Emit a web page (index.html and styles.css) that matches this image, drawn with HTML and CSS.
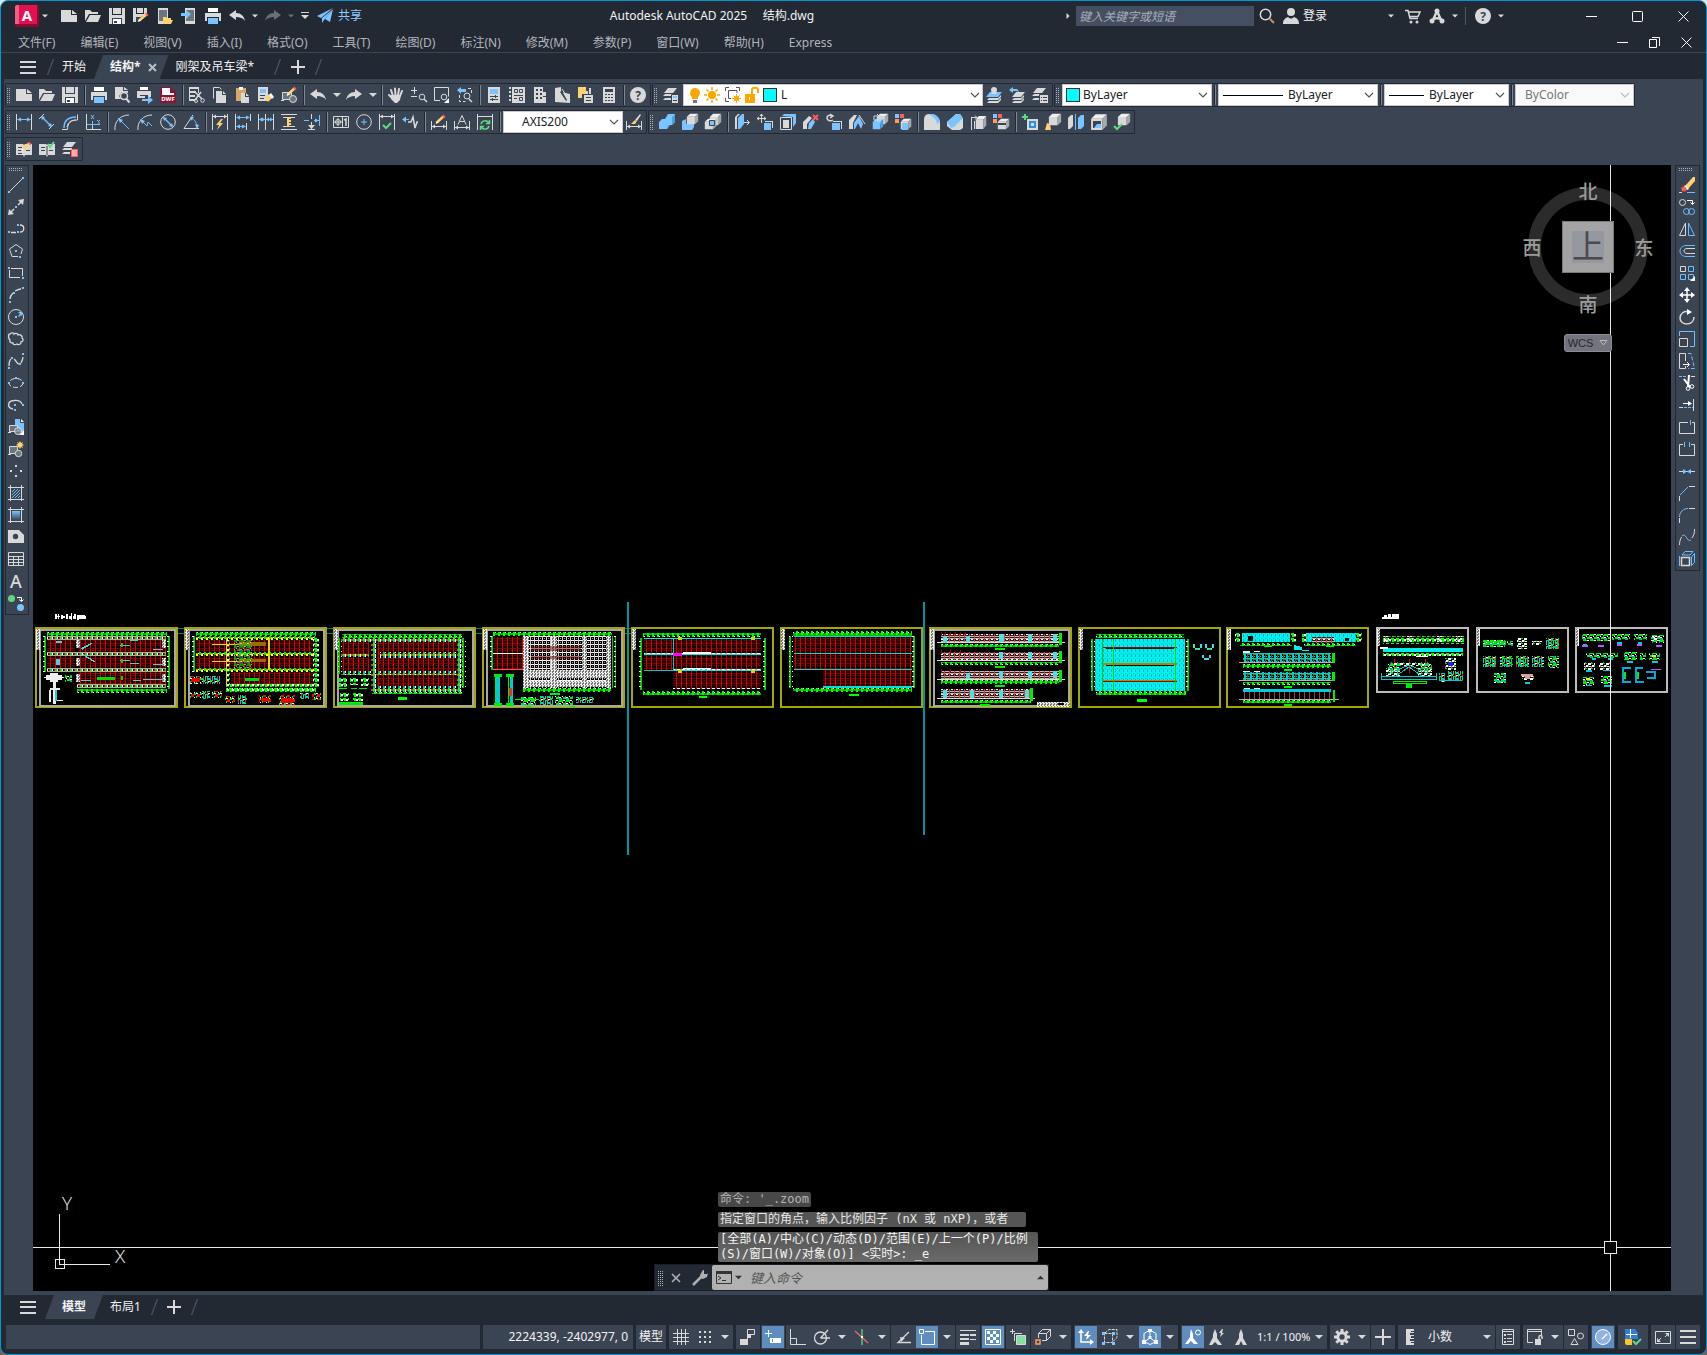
FILE: index.html
```html
<!DOCTYPE html>
<html lang="zh-CN">
<head>
<meta charset="utf-8">
<meta name="viewport" content="width=device-width, initial-scale=1">
<title>Autodesk AutoCAD 2025 结构.dwg</title>
<link rel="stylesheet" href="styles.css">
</head>
<body>
<svg class="defs" aria-hidden="true">
<defs>
<symbol id="new" viewBox="0 0 16 16"><path class="f" d="M0 2h10v5h6v7H0z"/><path class="f" d="M11 2l5 4h-5z"/></symbol>
<symbol id="open" viewBox="0 0 16 16"><path class="f" d="M0 2h5l2 2h6v2H4L0 13z"/><path class="f" d="M5 7h11l-3 7H1z"/></symbol>
<symbol id="save" viewBox="0 0 16 16"><path class="f" d="M0 0h3v7h10V0h3v16H0z"/><path class="f" d="M4 0h8v6H4z"/><path class="fd" d="M3 10h10v6H3z"/><path class="fw" d="M4 11h8v5H4z"/><path class="fd" d="M5 13h3v2H5z"/></symbol>
<symbol id="print" viewBox="0 0 16 16"><path class="fw" d="M3 0h10v4H3z"/><path class="f" d="M0 5h16v8h-2V9H2v4H0z"/><path class="fb" d="M3 10h10v6H3z"/></symbol>
<symbol id="undo" viewBox="0 0 16 16"><path class="f" d="M0 7l7-5v3c5 0 8 3 9 8-2-3-5-4-9-4v3z"/></symbol>
<symbol id="redo" viewBox="0 0 16 16"><path class="f" d="M16 7L9 2v3C4 5 1 8 0 13c2-3 5-4 9-4v3z"/></symbol>
<symbol id="caret" viewBox="0 0 8 8"><path class="f" d="M0 2h8L4 6z"/></symbol>
<symbol id="chev" viewBox="0 0 10 10"><path fill="none" stroke="currentColor" stroke-width="1.2" d="M1 3l4 4 4-4"/></symbol>
<symbol id="slash" viewBox="0 0 7 16"><path d="M6.500 0L.5 16" fill="none" stroke="#4a5362" stroke-width="1.300"/></symbol>
<symbol id="plus" viewBox="0 0 14 14"><path class="f" d="M6 0h2v6h6v2H8v6H6V8H0V6h6z"/></symbol>
<symbol id="burger" viewBox="0 0 16 13"><path class="f" d="M0 0h16v2H0zM0 5h16v2H0zM0 11h16v2H0z"/></symbol>
<symbol id="layers" viewBox="0 0 16 16"><path class="f" d="M5 1h9l-4 5H1zM2 7h8v2H0zM2 11h6v2H0z"/></symbol>
<symbol id="pencil" viewBox="0 0 16 16" preserveAspectRatio="none"><path class="fy" d="M5 11l1-3 6-6 2 2-6 6z"/><path class="fr" d="M12 2l1-1.500L15.500 3 14 5z"/><path class="fw" d="M5 11l1-3 2 2z"/></symbol>
<symbol id="box" viewBox="0 0 16 16" preserveAspectRatio="none"><path fill="#eee" d="M1 5l4-4h10l-4 4z"/><path class="f" d="M1 5h10v10H1z"/><path fill="#a5a9ad" d="M11 5l4-4v10l-4 4z"/></symbol>
<symbol id="boxb" viewBox="0 0 16 16" preserveAspectRatio="none"><path fill="#a8d8ff" d="M1 5l4-4h10l-4 4z"/><path class="fb" d="M1 5h10v10H1z"/><path fill="#4aa0e0" d="M11 5l4-4v10l-4 4z"/></symbol>

<pattern id="pRed" width="5" height="5" patternUnits="userSpaceOnUse"><path fill="#160000" d="M0 0h5v5H0z"/><path fill="#7c0000" d="M0 0h5v1H0z"/><path fill="#d00000" d="M0 0h1v5H0z"/><path fill="#600" d="M2 2h3v1H2z"/></pattern>
<pattern id="pGrn" width="5" height="4" patternUnits="userSpaceOnUse"><path fill="#00b800" d="M0 1h5v2H0z"/><path fill="#0f0" d="M1 0h2v4H1z"/><path fill="#fff" d="M3 0h1v1H3z"/></pattern>
<pattern id="pGrnV" width="4" height="5" patternUnits="userSpaceOnUse"><path fill="#0c0" d="M1 0h2v5H1z"/><path fill="#fff" d="M0 3h2v1H0z"/></pattern>
<pattern id="pTee" width="5" height="5" patternUnits="userSpaceOnUse"><path fill="#0f0" d="M0 0h3v2H0zM1 2h2v2H1z"/><path fill="#fff" d="M3 1h2v2H3z"/><path fill="#090" d="M3 3h2v1H3z"/></pattern>
<pattern id="pRow" width="5" height="4" patternUnits="userSpaceOnUse"><path fill="#aaa" d="M0 0h5v1H0zM0 3h5v1H0z"/><path fill="#0e0" d="M0 1h2v2H0z"/><path fill="#fff" d="M2 1h1v2H2z"/><path fill="#d00" d="M4 1h1v2H4z"/></pattern>
<pattern id="pRowY" width="5" height="4" patternUnits="userSpaceOnUse"><path fill="#aa0" d="M0 1h5v1H0z"/><path fill="#0e0" d="M0 0h2v3H0z"/><path fill="#ff0" d="M2 2h2v2H2z"/><path fill="#fff" d="M4 1h1v1H4z"/></pattern>
<pattern id="pRowR" width="5" height="5" patternUnits="userSpaceOnUse"><path fill="#0f0" d="M0 0h2v3H0z"/><path fill="#fff" d="M2 1h1v4H2z"/><path fill="#e33" d="M3 1h2v2H3z"/><path fill="#0aa" d="M0 3h2v2H0z"/></pattern>
<pattern id="pWht" width="4" height="4" patternUnits="userSpaceOnUse"><path fill="#000" d="M0 0h4v4H0z"/><path fill="#fff" d="M0 0h4v1H0z"/><path fill="#d8c8c8" d="M0 0h1v4H0z"/><path fill="#999" d="M2 2h1v1H2z"/></pattern>
<pattern id="pWht2" width="3" height="3" patternUnits="userSpaceOnUse"><path fill="#777" d="M0 0h3v3H0z"/><path fill="#eee" d="M0 0h2v1H0zM0 1h1v2H0zM2 2h1v1H2z"/></pattern>
<pattern id="pPink" width="5" height="5" patternUnits="userSpaceOnUse"><path fill="#2a1a1a" d="M0 0h5v5H0z"/><path fill="#c9b6b6" d="M0 0h5v1H0zM0 3h5v1H0z"/><path fill="#c44" d="M0 0h1v5H0z"/><path fill="#fff" d="M2 1h2v1H2z"/></pattern>
<pattern id="pCyn" width="4" height="5" patternUnits="userSpaceOnUse"><path fill="#00f0f0" d="M0 0h4v5H0z"/><path fill="#00b8c0" d="M1 1h1v3H1zM3 0h1v1H3z"/></pattern>
<pattern id="pCynW" width="5" height="4" patternUnits="userSpaceOnUse"><path fill="#0ee" d="M0 1h5v2H0z"/><path fill="#fff" d="M1 0h3v2H1z"/></pattern>
<pattern id="pCynX" width="6" height="5" patternUnits="userSpaceOnUse"><path fill="#0cc" d="M0 0h6v1H0zM0 3h5v1H0zM0 0h2v5H0z"/><path fill="#770" d="M3 1h3v1H3z"/><path fill="#066" d="M3 2h1v3H3z"/></pattern>
<pattern id="pMixG" width="7" height="6" patternUnits="userSpaceOnUse"><path fill="#0e0" d="M0 0h4v2H0zM4 3h3v2H4zM2 4h1v2H2z"/><path fill="#fff" d="M4 0h2v1H4zM0 3h2v1H0zM3 2h1v1H3z"/><path fill="#0aa" d="M0 4h2v2H0zM6 1h1v2H6z"/></pattern>
<pattern id="pMixC" width="7" height="6" patternUnits="userSpaceOnUse"><path fill="#0cd" d="M0 0h4v1H0zM0 0h1v5H0zM3 2h3v2H3z"/><path fill="#e22" d="M5 0h1v3H5zM2 4h1v2H2z"/><path fill="#0e0" d="M2 1h1v3H2zM5 4h2v2H5z"/><path fill="#fff" d="M3 5h2v1H3z"/></pattern>
<pattern id="pMixR" width="6" height="5" patternUnits="userSpaceOnUse"><path fill="#f00" d="M1 1h3v3H1z"/><path fill="#0e0" d="M4 0h2v2H4zM0 3h1v2H0z"/><path fill="#fff" d="M0 0h2v1H0zM4 4h1v1H4z"/></pattern>
<pattern id="pMixW" width="6" height="5" patternUnits="userSpaceOnUse"><path fill="#fff" d="M0 0h3v2H0zM4 2h2v2H4zM1 3h2v1H1z"/><path fill="#0d0" d="M3 0h2v1H3zM0 2h1v2H0z"/><path fill="#d4a" d="M3 3h1v2H3z"/></pattern>
<linearGradient id="grad" x2="0" y2="1"><stop offset="0" stop-color="#7cc4ff"/><stop offset="1" stop-color="#3b4453"/></linearGradient>
</defs>
</svg>

<div class="window">
<header class="title">
  <button class="app" aria-label="应用程序菜单">A</button>
  <button class="dd" aria-label="展开"><svg><use href="#caret"/></svg></button>
  <div class="quick">
    <button aria-label="新建"><svg><use href="#new"/></svg></button>
    <button aria-label="打开"><svg><use href="#open"/></svg></button>
    <button aria-label="保存"><svg><use href="#save"/></svg></button>
    <button aria-label="另存为"><svg viewBox="0 0 16 16"><path class="f" d="M0 0h3v6h8V0h3v8H9l-3 6H0z"/><path class="f" d="M4 0h6v5H4z"/><path class="fd" d="M3 9h5v5H3z"/><use href="#pencil" y="4" width="16" height="14"/></svg></button>
    <button aria-label="从移动设备打开"><svg viewBox="0 0 16 16"><path class="f" d="M1 0h10v16H1z"/><path fill="#6e747d" d="M2 2h8v11H2z"/><path class="fy" d="M6 9h3l1 1h4v2h2l-2 4H6z"/></svg></button>
    <button aria-label="保存到移动设备"><svg viewBox="0 0 16 16"><path class="f" d="M4 0h10v16H4z"/><path fill="#6e747d" d="M5 2h8v11H5z"/><path class="fb" d="M0 5h5V2l5 4-5 5V8H0z"/></svg></button>
    <button aria-label="打印"><svg><use href="#print"/></svg></button>
    <button aria-label="放弃"><svg><use href="#undo"/></svg></button>
    <button class="dd" aria-label="放弃列表"><svg><use href="#caret"/></svg></button>
    <button class="dim" aria-label="重做"><svg><use href="#redo"/></svg></button>
    <button class="dd dim" aria-label="重做列表"><svg><use href="#caret"/></svg></button>
    <button class="cust" aria-label="自定义"><svg viewBox="0 0 8 8"><path class="f" d="M0 0h8v1H0zM0 3h8L4 7z"/></svg></button>
    <button class="share"><svg viewBox="0 0 16 16"><path class="fb" d="M16 0L0 8l4 2zM15 2L5 10v5l2-3zM16 1L8 11l5 3z"/></svg>共享</button>
  </div>
  <h1>Autodesk AutoCAD 2025 &nbsp;&nbsp;&nbsp; 结构.dwg</h1>
  <div class="info">
    <button class="dd" aria-label="折叠搜索"><svg viewBox="0 0 8 8"><path class="f" d="M2 0l4 4-4 4z"/></svg></button>
    <input type="search" aria-label="搜索" placeholder="键入关键字或短语">
    <button aria-label="查找"><svg viewBox="0 0 16 16"><circle class="s" cx="6.500" cy="6.500" r="5.200" stroke-width="1.500"/><path fill="none" stroke="#c98f5c" stroke-width="2" d="M11 11l4 4"/></svg></button>
    <button class="login"><svg viewBox="0 0 16 16"><circle class="f" cx="8" cy="4" r="4"/><path class="f" d="M0 16c0-4 2-6 5-7 2 2 4 2 6 0 3 1 5 3 5 7z"/></svg>登录</button>
    <button class="dd" aria-label="登录菜单"><svg><use href="#caret"/></svg></button>
    <button class="cart" aria-label="应用商店"><svg viewBox="0 0 16 16"><path class="s" d="M0 2.500h3l2 8h8M4 4h11l-2 4.500H5" stroke-width="1.500"/><circle class="f" cx="6" cy="14" r="1.500"/><circle class="f" cx="12" cy="14" r="1.500"/></svg></button>
    <button aria-label="Autodesk"><svg viewBox="0 0 16 16"><path class="s" stroke-width="2.500" d="M8 3L4 12M8 3l4 9M3 12c3-2 7-2 10 0"/><circle class="f" cx="8" cy="3" r="2.500"/><circle class="f" cx="3" cy="13" r="2.500"/><circle class="f" cx="13" cy="13" r="2.500"/></svg></button>
    <button class="dd" aria-label="更多"><svg><use href="#caret"/></svg></button>
    <i class="bar"></i>
    <button aria-label="帮助"><svg viewBox="0 0 16 16"><circle class="f" cx="8" cy="8" r="8"/><text class="q" x="8" y="12.500">?</text></svg></button>
    <button class="dd" aria-label="帮助菜单"><svg><use href="#caret"/></svg></button>
  </div>
  <div class="winbtns">
    <button aria-label="最小化"><svg viewBox="0 0 11 11"><path class="sw" d="M0 5.500h11"/></svg></button>
    <button aria-label="最大化"><svg viewBox="0 0 11 11"><rect class="sw" x=".5" y=".5" width="10" height="10" rx="1"/></svg></button>
    <button aria-label="关闭"><svg viewBox="0 0 11 11"><path class="sw" d="M.5.5l10 10M10.500.5l-10 10"/></svg></button>
  </div>
</header>

<nav class="menu">
  <button>文件(F)</button><button>编辑(E)</button><button>视图(V)</button><button>插入(I)</button><button>格式(O)</button><button>工具(T)</button><button>绘图(D)</button><button>标注(N)</button><button>修改(M)</button><button>参数(P)</button><button>窗口(W)</button><button>帮助(H)</button><button>Express</button>
  <div class="mdi">
    <button aria-label="最小化图形"><svg viewBox="0 0 11 11"><path class="sw" d="M0 5.500h11"/></svg></button>
    <button aria-label="还原图形"><svg viewBox="0 0 11 11"><path class="sw" d="M.5 2.500h7v8h-7zM3 .5h7.500V9"/></svg></button>
    <button aria-label="关闭图形"><svg viewBox="0 0 11 11"><path class="sw" d="M.5.5l10 10M10.500.5l-10 10"/></svg></button>
  </div>
</nav>

<nav class="tabs files">
  <button class="burger" aria-label="图形列表"><svg><use href="#burger"/></svg></button>
  <svg class="slash first"><use href="#slash"/></svg>
  <button class="start">开始</button>
  <div class="tab on"><button>结构*</button><button class="x" aria-label="关闭"><svg viewBox="0 0 9 9"><path d="M1 1l7 7M8 1L1 8" fill="none" stroke="#b9bec6" stroke-width="2"/></svg></button></div>
  <button class="next long">刚架及吊车梁*</button>
  <svg class="slash"><use href="#slash"/></svg>
  <button class="add" aria-label="新图形"><svg><use href="#plus"/></svg></button>
  <svg class="slash"><use href="#slash"/></svg>
</nav>

<section class="bars">
<div class="row">
  <div class="bar-box"><i class="grip"></i>
    <button aria-label="新建"><svg><use href="#new"/></svg></button>
    <button aria-label="打开"><svg><use href="#open"/></svg></button>
    <button aria-label="保存"><svg><use href="#save"/></svg></button>
    <i class="sep"></i>
    <button aria-label="打印"><svg><use href="#print"/></svg></button>
    <button aria-label="打印预览"><svg viewBox="0 0 16 16"><path class="f" d="M1 0h8v4h5v2L8 5 5 9l2 3H1z"/><path class="f" d="M10 0l4 3h-4z"/><circle class="s" cx="10" cy="9" r="3.500" stroke-width="1.500"/><path class="s" stroke-width="2" d="M12.500 12l3 3.500"/></svg></button>
    <button aria-label="发布"><svg viewBox="0 0 16 16"><path class="fw" d="M3 0h8v3H3z"/><path class="f" d="M0 4h14v6h-3V8H3v3H0z"/><path class="f" d="M3 9h5v2H3z"/><path class="fb" d="M5 12h6v-3l5 4-5 4v-3H5z"/></svg></button>
    <button aria-label="DWF"><svg viewBox="0 0 16 16"><path fill="#8d1430" d="M0 2l2-2h8l6 5v11H0z"/><path class="fw" d="M2 1h8v5h4v2H2z"/><path fill="#8d1430" d="M0 8h16v8H0z"/><text class="dwf" x="8" y="14">DWF</text></svg></button>
    <i class="sep"></i>
    <button aria-label="剪切"><svg viewBox="0 0 16 16"><path class="s" stroke-width="2" d="M0 1h10M1 5h6M1 9h5M0 13h6"/><path class="s" d="M.5 0v14M9.500 0v6"/><path class="s" stroke-width="1.500" d="M5 4l8 8M12 5l-6 8"/><circle class="s" cx="13.500" cy="13.500" r="1.800"/><circle class="s" cx="7" cy="14" r="1.500"/></svg></button>
    <button aria-label="复制"><svg viewBox="0 0 16 16"><path class="s" d="M1.500 11.500V.5h6l2 2"/><path class="f" d="M4 4h6v4h4v8H4zM11 4l3 3h-3z"/></svg></button>
    <button aria-label="粘贴"><svg viewBox="0 0 16 16"><path fill="#d9a866" d="M1 1h10v5H6v8H1z"/><path class="fw" d="M4 0h4v3H4z"/><path class="f" d="M6 6h4v4h4v6H6zM11 6l3 3h-3z"/></svg></button>
    <button aria-label="特性匹配"><svg viewBox="0 0 16 16"><path class="f" d="M0 0h10v14H0z"/><path class="fb" d="M2 2h6v4H2z"/><path class="fd" d="M2 8h5v1H2zM2 11h4v1H2z"/><path class="fy" d="M7 10l4-3 3 4-4 4z"/><path class="fw" d="M11 8l2-2 3 4-2 2z"/></svg></button>
    <button aria-label="块编辑器"><svg viewBox="0 0 16 16"><path fill="#6e747d" stroke="#d9d9d9" d="M1.500 5.500h9v7h-9zM0 13.500h3"/><circle cx="12" cy="12" r="3.500" fill="#6e747d" stroke="#d9d9d9"/><use href="#pencil" x="1" y="-1" width="15" height="14"/></svg></button>
    <i class="sep"></i>
    <button aria-label="放弃"><svg><use href="#undo"/></svg></button>
    <button class="dd" aria-label="放弃列表"><svg><use href="#caret"/></svg></button>
    <button aria-label="重做"><svg><use href="#redo"/></svg></button>
    <button class="dd" aria-label="重做列表"><svg><use href="#caret"/></svg></button>
    <i class="sep"></i>
    <button aria-label="平移"><svg viewBox="0 0 16 16"><path class="s" stroke-width="2" stroke-linecap="round" d="M5 9L3 3M7.500 8L7 1.500M10 8l1-6M12 9l2-5M4 11L1 8"/><path class="f" d="M3 8h10l-1 5-3 3H7l-4-4z"/></svg></button>
    <button aria-label="实时缩放"><svg viewBox="0 0 16 16"><path class="s" d="M0 3.500h6M3.500 0v7M0 9.500h6"/><circle class="s" cx="11" cy="10" r="2.800"/><path class="s" stroke-width="1.500" d="M13 12l3 3"/></svg></button>
    <button aria-label="窗口缩放"><svg viewBox="0 0 16 16"><path class="s" d="M6 13.500H.5V.5h14v9"/><circle class="s" cx="10" cy="10" r="2.800"/><path class="fw" d="M15 11v5h-5z"/></svg></button>
    <button aria-label="缩放上一个"><svg viewBox="0 0 16 16"><path class="fb" d="M0 3l4-3v2h5v3H4v2z"/><path class="s" stroke-dasharray="3 2" d="M2.500 8v6.500h6M11 1.500h3.500V8"/><circle class="s" cx="10" cy="9" r="3"/><path class="s" stroke-width="1.500" d="M12 12l3 3"/></svg></button>
    <i class="sep"></i>
    <button aria-label="特性"><svg viewBox="0 0 16 16"><path class="f" d="M2 0h12v16H2z"/><path class="fb" d="M4 2h8v5H4z"/><path class="fd" d="M4 9h8v1H4zM4 12h8v1H4zM9 8h1v3H9zM6 11h1v3H6z"/></svg></button>
    <button aria-label="设计中心"><svg viewBox="0 0 16 16"><path class="s" stroke-width="2" stroke-dasharray="2 2" d="M1 0v16"/><path class="f" d="M3 0h13v16H3z"/><path fill="none" stroke="#3b4453" d="M5.500 2.500h3v3h-3zM10.500 2.500h3v3h-3zM10.500 10.500h3v3h-3zM5 8.500h9M5 11.500h3"/></svg></button>
    <button aria-label="工具选项板"><svg viewBox="0 0 16 16"><path class="f" d="M2 0h9v5h3v11H2z"/><path class="fd" d="M4 2h2v2H4zM8 2h2v2H8zM4 6h2v2H4zM8 6h2v2H8zM4 10h2v2H4zM8 10h2v2H8zM11 9h4v1h-4z"/></svg></button>
    <button aria-label="图纸集"><svg viewBox="0 0 16 16"><path class="f" d="M0 1l6-1v5l9 2v9L0 15z"/><path class="fd" d="M7 4l5 9-1 1-6-9z"/><path class="s" d="M7 2l8 12"/></svg></button>
    <button aria-label="标记集"><svg viewBox="0 0 16 16"><path class="fy" d="M0 0h8v7H4v4H0z"/><path class="f" d="M6 8h9v8H6zM11 1h2v6h-2zM8 4h2v3H8z"/><path class="fd" d="M8 10h5v1H8zM8 13h5v1H8z"/></svg></button>
    <button aria-label="计算器"><svg viewBox="0 0 16 16"><path class="f" d="M2 0h12v16H2z"/><path class="fd" d="M4 2h8v3H4zM4 7h2v1H4zM7 7h2v1H7zM10 7h2v1h-2zM4 10h2v1H4zM7 10h2v1H7zM10 10h2v1h-2zM4 13h2v1H4zM7 13h2v1H7zM10 13h2v1h-2z"/></svg></button>
    <i class="sep"></i>
    <button aria-label="帮助"><svg viewBox="0 0 16 16"><circle class="f" cx="8" cy="8" r="8"/><text class="q" x="8" y="12.500">?</text></svg></button>
  </div>
  <div class="bar-box"><i class="grip"></i>
    <button aria-label="图层特性"><svg viewBox="0 0 16 16"><use href="#layers" width="16" height="16"/><path class="f" stroke="#3b4453" d="M8.500 7.500h7v9h-7z"/><path class="fb" d="M10 9h4v2h-4z"/><path class="fd" d="M10 13h4v1h-4z"/></svg></button>
    <label class="combo layer"><svg viewBox="0 0 16 16"><circle cx="8" cy="6" r="5" fill="#ffa500"/><path fill="#ffa500" d="M5 8h6v4H5z"/><path fill="#777" d="M6 13h4v3H6z"/></svg><svg viewBox="0 0 16 16"><circle cx="8" cy="8" r="4" fill="#ffa500"/><path stroke="#ffa500" stroke-width="1.500" d="M8 0v3M8 13v3M0 8h3M13 8h3M2.500 2.500l2 2M11.500 11.500l2 2M13.500 2.500l-2 2M4.500 11.500l-2 2"/></svg><svg class="gapl" viewBox="0 0 16 16"><path fill="none" stroke="#555" d="M.5 4V.5H4M11 .5h3.500V4M.5 11v3.500H4M3.500 6V3.500H12V6M3.500 6v5.500H6"/><circle cx="11.500" cy="11.500" r="2.500" fill="#ffa500"/><path stroke="#ffa500" d="M11.500 7v9M7 11.500h9M8.500 8.500l6 6M14.500 8.500l-6 6"/></svg><svg viewBox="0 0 16 16"><path fill="#ffa500" d="M1 7h10v9H1z"/><path fill="none" stroke="#ffa500" stroke-width="2" d="M8 7V3c0-3 6-3 6 0v3"/><path fill="#fff" d="M5 10h1v3H5z"/></svg><i class="sw-c"></i>
      <select aria-label="图层"><option>L</option></select><svg class="chev"><use href="#chev"/></svg></label>
    <button aria-label="置为当前图层"><svg viewBox="0 0 16 16"><path class="fb" d="M4 5h12l-4 5H0z"/><path class="f" d="M3 11h9l3-3v2l-3 3H1zM3 14h9l3-3v2l-3 3H1z"/><circle class="f" cx="8" cy="3" r="3"/><path class="f" d="M5 7c1-3 5-3 6 0z"/></svg></button>
    <button aria-label="上一个图层"><svg viewBox="0 0 16 16"><path class="f" d="M7 5h9l-4 5H3zM5 11h7l3-3v2l-3 3H3zM5 14h7l3-3v2l-3 3H3z"/><path class="fb" d="M0 3l4-3v2h3c2 0 3 2 3 4-1-2-3-2-6-2v2z"/></svg></button>
    <button aria-label="图层状态"><svg viewBox="0 0 16 16"><use href="#layers" width="16" height="16"/><path class="f" stroke="#3b4453" d="M7.500 7.500h9v9h-9z"/><path class="fd" d="M9 10h1v1H9zM11 10h4v1h-4zM9 13h1v1H9zM11 13h4v1h-4z"/></svg></button>
  </div>
  <div class="bar-box"><i class="grip"></i>
    <label class="combo c150"><i class="sw-c"></i><select aria-label="颜色"><option>ByLayer</option></select><svg class="chev"><use href="#chev"/></svg></label>
    <i class="sep"></i>
    <label class="combo c160"><i class="ln l60"></i><select aria-label="线型"><option>ByLayer</option></select><svg class="chev"><use href="#chev"/></svg></label>
    <i class="sep"></i>
    <label class="combo c125"><i class="ln l35"></i><select aria-label="线宽"><option>ByLayer</option></select><svg class="chev"><use href="#chev"/></svg></label>
    <i class="sep"></i>
    <label class="combo c119 off"><select aria-label="打印样式" disabled><option>ByColor</option></select><svg class="chev"><use href="#chev"/></svg></label>
  </div>
</div>

<div class="row">
  <div class="bar-box"><i class="grip"></i>
    <button aria-label="线性标注"><svg viewBox="0 0 16 16"><path class="s" d="M.5 0v16M15.500 0v16"/><path class="sb" d="M2 5.500h12"/><path class="fb" d="M1 5.500l4-2v4zM15 5.500l-4-2v4z"/></svg></button>
    <button aria-label="对齐标注"><svg viewBox="0 0 16 16"><path class="s" d="M0 5l5-5M10 15l5-5"/><path class="sb" stroke-width="1.500" d="M3 3l9 9"/><path class="fb" d="M2 2l4 1-3 3zM13 13l-4-1 3-3z"/></svg></button>
    <button aria-label="弧长标注"><svg viewBox="0 0 16 16"><path class="s" d="M0 15.500h5.500C5.500 9 9 6 15.500 6V.5"/><path class="s" d="M5 13C6 8 9 6 14 6"/><path class="sb" stroke-width="1.500" d="M2 14C2 7 6 3 14 3"/></svg></button>
    <button aria-label="坐标标注"><svg viewBox="0 0 16 16"><path class="s" d="M1.500 0v15.500H16M7.500 8v8"/><path class="sb" d="M2 10.500h13M7.500 7v5M6 1l3 4M9 1L6 5M12 6l2 2v2M15 6l-2 2"/></svg></button>
    <i class="sep"></i>
    <button aria-label="半径标注"><svg viewBox="0 0 16 16"><path class="s" d="M1 16C0 8 6 1 15 1"/><path class="sb" d="M6 6l9 9"/><path class="fb" d="M4 4l5 2-3 3z"/></svg></button>
    <button aria-label="折弯标注"><svg viewBox="0 0 16 16"><path class="s" d="M1 16C0 8 6 1 15 1"/><path class="sb" d="M5 7l5 5 1-4 4 4"/><path class="fb" d="M3 5l5 2-3 3z"/></svg></button>
    <button aria-label="直径标注"><svg viewBox="0 0 16 16"><circle class="s" cx="8" cy="8" r="7.300"/><path class="sb" stroke-width="1.500" d="M4 4l8 8"/><path class="fb" d="M3 3l4 1-3 3zM13 13l-4-1 3-3z"/></svg></button>
    <button aria-label="角度标注"><svg viewBox="0 0 16 16"><path class="s" d="M10 1L1 14.500h15"/><path class="sb" d="M8 4c4 2 6 5 6 10"/><path class="fb" d="M7 3h4l-3 4zM12 10l4 1-2 4z"/></svg></button>
    <i class="sep"></i>
    <button aria-label="快速标注"><svg viewBox="0 0 16 16"><path class="s" d="M.5 0v16M15.500 0v16M1 2.500h14"/><path class="f" d="M1 2.500l3-2v4zM15 2.500l-3-2v4z"/><path class="fy" d="M9 5l-5 6h3l-2 5 6-7H8l3-4z"/></svg></button>
    <button aria-label="基线标注"><svg viewBox="0 0 16 16"><path class="s" d="M.5 0v16M15.500 0v7M11.500 9v7"/><path class="sb" d="M2 3.500h12M2 12.500h8"/><path class="fb" d="M1 3.500l4-2v4zM15 3.500l-4-2v4zM1 12.500l4-2v4zM11 12.500l-4-2v4z"/></svg></button>
    <button aria-label="连续标注"><svg viewBox="0 0 16 16"><path class="s" d="M.5 0v16M7.500 0v16M15.500 0v16"/><path class="sb" d="M1 5.500h14"/><path class="fb" d="M1 5.500l3-2v4zM7 5.500l-3-2v4zM8 5.500l3-2v4zM15 5.500l-3-2v4z"/></svg></button>
    <button aria-label="标注间距"><svg viewBox="0 0 16 16"><path class="s" d="M0 .5h16M0 15.500h16M2 3.500h12M2 12.500h12"/><path class="fy" d="M6 3h4v10H6z"/><path class="fd" d="M8 5h2v1H8zM8 8h2v1H8zM8 11h2v1H8z"/></svg></button>
    <button aria-label="标注打断"><svg viewBox="0 0 16 16"><path class="s" d="M7.500 0v5M7.500 8v8M4 15.500h7"/><path class="sb" d="M0 6.500h5M10 6.500h5M15.500 1v11"/><path class="fb" d="M15 6.500l-4-2v4z"/><path class="f" d="M4 11h7l-3.500 4z"/></svg></button>
    <i class="sep"></i>
    <button aria-label="公差"><svg viewBox="0 0 16 16"><path class="s" d="M.5 2.500h15v11H.5zM9.500 2v12M1 8h8M5 4v8"/><circle class="s" cx="5" cy="8" r="2.500"/><path class="s" stroke-width="1.500" d="M11 6l2-1v7"/></svg></button>
    <button aria-label="圆心标记"><svg viewBox="0 0 16 16"><circle class="s" cx="8" cy="8" r="7.300"/><path class="sb" d="M5 8h6M8 5v6"/></svg></button>
    <button aria-label="检验"><svg viewBox="0 0 16 16"><path class="s" d="M.5 0v16M15.500 0v16M1 2.500h14"/><path class="f" d="M1 2.500l3-2v4zM15 2.500l-3-2v4z"/><path class="sg" stroke-width="2" d="M4 11l3 3 5-5"/></svg></button>
    <button aria-label="折弯线性"><svg viewBox="0 0 16 16"><path class="sb" d="M2 5.500h5"/><path class="fb" d="M0 5.500l4-3v6z"/><path class="s" stroke-width="1.500" d="M6 8h3l2-5 2 11 2-6h1"/></svg></button>
    <i class="sep"></i>
    <button aria-label="编辑标注"><svg viewBox="0 0 16 16"><path class="s" d="M.5 7v9M15.500 7v9M1 12.500h14"/><path class="f" d="M1 12.500l3-2v4zM15 12.500l-3-2v4z"/><use href="#pencil" width="15" height="14"/></svg></button>
    <button aria-label="编辑标注文字"><svg viewBox="0 0 16 16"><path class="s" d="M.5 7v9M15.500 7v9M1 13.500h14M4 10.500l4-9 4 9M6 7.500h4"/><path class="f" d="M1 13.500l3-2v4zM15 13.500l-3-2v4z"/></svg></button>
    <button aria-label="标注更新"><svg viewBox="0 0 16 16"><path class="s" d="M.5 0v16M15.500 0v16M1 2.500h14"/><path class="sg" stroke-width="1.500" d="M4 10c1-4 6-4 8-1M12 12c-1 4-6 4-8 1M12.500 6v3.500H9M3.500 16v-3.500H7"/></svg></button>
    <i class="sep"></i>
    <label class="combo c120"><select aria-label="标注样式"><option>AXIS200</option></select><svg class="chev"><use href="#chev"/></svg></label>
    <button aria-label="标注样式管理"><svg viewBox="0 0 16 16"><path class="s" d="M.5 7v9M15.500 7v9M1 12.500h14"/><path class="f" d="M1 12.500l3-2v4zM15 12.500l-3-2v4zM14 0l1 1-4 6-2-1z"/><path class="fy" d="M9 6l2 1-2 3H5z"/></svg></button>
  </div>
  <div class="bar-box"><i class="grip"></i>
    <button aria-label="并集"><svg viewBox="0 0 16 16"><path class="fb" d="M0 8l3-3h3l3-5h7v8l-3 3h-2l-3 4H0z"/><path fill="#4aa0e0" d="M13 3l3-3v8l-3 3zM9 11h2l-3 4z"/></svg></button>
    <button aria-label="差集"><svg viewBox="0 0 16 16"><path class="fb" d="M0 7l4-2v5h8v3l-2 3H0z"/><use href="#box" x="4" y="-1" width="13" height="12"/></svg></button>
    <button aria-label="交集"><svg viewBox="0 0 16 16"><use href="#box" x="4" y="-1" width="13" height="13"/><use href="#box" x="-1" y="4" width="13" height="12"/><path class="fb" stroke="#3b4453" d="M4.500 6.500h5v5h-5z"/></svg></button>
    <i class="sep"></i>
    <button aria-label="拉伸面"><svg viewBox="0 0 16 16"><path class="f" d="M1 3l3-3h2L3 3v12H1z"/><path class="fb" d="M4 4l4-4h2v10l-4 5H4z"/><path class="s" d="M10 8.500h5M13 6l2.500 2.500L13 11"/></svg></button>
    <button aria-label="移动面"><svg viewBox="0 0 16 16"><path class="s" d="M4.500 0v9M0 4.500h9M3 2l1.500-2L6 2M2 3L0 4.500 2 6M7 3l2 1.500L7 6"/><path class="fb" d="M7 9h7v7H7z"/><path class="f" d="M8 7h8v7h-1V8H8z"/></svg></button>
    <button aria-label="偏移面"><svg viewBox="0 0 16 16"><path class="s" d="M.5 3.500h11v12H.5z"/><path class="f" d="M3 6h6v8H3z"/><path class="fb" d="M2 2l2-2h12l-3 3zM13 3l3-3v9l-3 4z"/></svg></button>
    <button aria-label="删除面"><svg viewBox="0 0 16 16"><path class="f" d="M0 8l6-6 3 2-5 6v5H0z"/><path class="fb" d="M6 9l4-4 2 3-4 7H5z"/><path class="sr" stroke-width="2" d="M10 1l5 5M15 1l-5 5"/></svg></button>
    <button aria-label="旋转面"><svg viewBox="0 0 16 16"><path class="s" stroke-width="1.500" d="M6 2C3 0 1 2 1 4s3 4 6 2M4 0l3 2-3 2"/><path class="fb" d="M6 9h8v7H6z"/><path class="f" d="M7 7h9v8h-1V8H7z"/></svg></button>
    <button aria-label="倾斜面"><svg viewBox="0 0 16 16"><path class="f" d="M0 6l5-5h3l-4 8v6H0z"/><path class="fb" d="M5 9l5-7 4 8-2 5-3-6-3 6H5z"/><path class="s" d="M10 1l6 9"/></svg></button>
    <button aria-label="复制面"><svg viewBox="0 0 16 16"><use href="#box" x="4" y="-1" width="13" height="12"/><use href="#boxb" x="0" y="4" width="12" height="12"/><path class="s" d="M2 6V2h5M5 0l2 2-2 2"/></svg></button>
    <button aria-label="着色面"><svg viewBox="0 0 16 16"><use href="#box" x="5" y="4" width="12" height="12"/><path class="fb" d="M0 0h4v4H0z"/><path class="fr" d="M5 0h4v4H5z"/><path fill="#ff9a5c" d="M0 5h4v4H0z"/><path class="fb" d="M7 9h6v7H7z"/></svg></button>
    <i class="sep"></i>
    <button aria-label="圆角边"><svg viewBox="0 0 16 16"><path class="f" d="M0 6c0-4 2-6 5-6h4l7 7v9H0z"/><path class="fb" d="M4 0h5c4 1 7 4 7 8l-3 2C13 6 9 2 4 0z"/></svg></button>
    <button aria-label="倒角边"><svg viewBox="0 0 16 16"><path class="f" d="M9 0h4l3 5v9l-3 2H5l-5-4V8z"/><path class="fb" d="M0 8l9-8h4l3 4-9 9-3 1z"/></svg></button>
    <button aria-label="复制边"><svg viewBox="0 0 16 16"><path class="s" d="M1.500 4v12M4.500 7v8M1 3.500h6M5 1.500l2 2-2 2"/><use href="#box" x="5" y="1" width="12" height="15"/></svg></button>
    <button aria-label="着色边"><svg viewBox="0 0 16 16"><use href="#box" x="4" y="4" width="13" height="12"/><path class="fb" d="M0 0h4v4H0z"/><path class="fr" d="M5 0h4v4H5z"/><path fill="#ff9a5c" d="M0 5h4v4H0z"/><path class="fd" d="M5 9h8v2H5z"/></svg></button>
    <i class="sep"></i>
    <button aria-label="压印"><svg viewBox="0 0 16 16"><path class="sg" stroke-width="2" d="M0 3h6M3 0v6"/><path class="f" d="M5 5h11v11H5z"/><path fill="#d9d9d9" stroke="#2b8ede" stroke-width="2" d="M8 8h5v5H8z"/></svg></button>
    <button aria-label="清除"><svg viewBox="0 0 16 16"><use href="#box" x="3" y="-1" width="14" height="13"/><path class="fy" d="M2 9l3 1 1 6H0z"/></svg></button>
    <button aria-label="分割"><svg viewBox="0 0 16 16"><path class="f" d="M0 4l3-3h2v11l-3 3H0z"/><path class="sb" d="M7.500 0v16"/><path class="fb" d="M10 4l3-3h3v11l-3 3h-3z"/></svg></button>
    <button aria-label="抽壳"><svg viewBox="0 0 16 16"><use href="#box" x="-1" y="-1" width="18" height="18"/><path class="fd" d="M2 7h8v7H2z"/><path class="fb" d="M3 14l3-4h4v4z"/></svg></button>
    <button aria-label="检查"><svg viewBox="0 0 16 16"><use href="#box" x="3" y="-1" width="14" height="13"/><path class="sg" stroke-width="2" d="M0 12l3 3 5-5"/></svg></button>
  </div>
</div>

<div class="row">
  <div class="bar-box"><i class="grip"></i>
    <button aria-label="编辑参照"><svg viewBox="0 0 16 16"><path class="f" d="M0 3h7l1 1 1-1h7v11H9l-1 2-1-2H0z"/><path class="fd" d="M2 6h4v1H2zM2 9h4v1H2zM2 12h4v1H2zM10 9h4v1h-4z"/><use href="#pencil" width="16" height="14"/></svg></button>
    <button aria-label="保存参照"><svg viewBox="0 0 16 16"><path class="f" d="M0 3h7l1 1 1-1h7v11H9l-1 2-1-2H0z"/><path class="fd" d="M2 6h4v1H2zM2 9h4v1H2zM10 9h4v1h-4zM7.500 5h1v9h-1z"/><path class="sg" stroke-width="2" d="M9 3l2 3 4-5"/></svg></button>
    <button aria-label="关闭参照"><svg viewBox="0 0 16 16"><use href="#layers" width="16" height="16"/><path fill="#ffa9a9" stroke="#ff6060" d="M9.500 8.500h6v7h-6z"/></svg></button>
  </div>
</div>
</section>

<main class="work">
<aside class="side left"><div class="vbar"><i class="vgrip"></i>
  <button aria-label="直线"><svg viewBox="0 0 16 16"><path class="s" d="M2 14L14 2"/><path class="fb" d="M0 14h2v2H0zM14 0h2v2h-2z"/></svg></button>
  <button aria-label="构造线"><svg viewBox="0 0 16 16"><path class="s" stroke-width="1.500" d="M3 13l3-3M10 6l3-3"/><path class="f" d="M0 16l1-6 5 5zM16 0l-1 6-5-5z"/><path class="fb" d="M7 7h2v2H7z"/></svg></button>
  <button aria-label="多段线"><svg viewBox="0 0 16 16"><path class="s" d="M3 11.500h5M12 4c5 0 5 7 0 7" stroke-width="1.300"/><path class="fb" d="M0 10h2v2H0zM9 3h2v2H9zM9 10h2v2H9z"/></svg></button>
  <button aria-label="多边形"><svg viewBox="0 0 16 16"><path class="s" d="M10 13.500H4L1.500 6 8 1.500 14.500 6 13 11"/><path class="fb" d="M7 7h2v2H7zM11 13h2v2h-2z"/></svg></button>
  <button aria-label="矩形"><svg viewBox="0 0 16 16"><path class="s" d="M3 3.500h11.500V11M12 12.500H1.500V5"/><path class="fb" d="M0 2h2v2H0zM14 12h2v2h-2z"/></svg></button>
  <button aria-label="圆弧"><svg viewBox="0 0 16 16"><path class="s" d="M2 12c0-2 1-4 3-6M7 4c2-1 4-2 6-2" stroke-width="1.300"/><path class="fb" d="M1 14h2v2H1zM5 5h2v2H5zM14 0h2v2h-2z"/></svg></button>
  <button aria-label="圆"><svg viewBox="0 0 16 16"><circle class="s" cx="8" cy="8" r="7.500"/><path class="fb" d="M7 7h2v2H7zM10 3h4v4l-1-1-2 2-1-1 2-2z"/></svg></button>
  <button aria-label="修订云线"><svg viewBox="0 0 16 16"><path class="s" stroke-width="1.300" d="M2 9C0 7 0 3 2 3c1-2 4-1 4 0 1-1 4-1 4 1 2-1 5 1 4 3 2 1 1 4-1 4 0 3-3 3-4 2-2 1-4 1-4-1-2 0-4-1-3-3z"/></svg></button>
  <button aria-label="样条曲线"><svg viewBox="0 0 16 16"><path class="s" d="M1 13c0-3 1-6 2-7M6 6c2 1 2 4 5 5M13 10c1-2 2-4 2-6" stroke-width="1.300"/><path class="fb" d="M0 14h2v2H0zM3 4h2v2H3zM11 10h2v2h-2zM14 0h2v2h-2z"/></svg></button>
  <button aria-label="椭圆"><svg viewBox="0 0 16 16"><ellipse class="s" cx="8" cy="8" rx="7" ry="4.500" stroke-dasharray="5 2"/><path class="fb" d="M7 2h2v2H7zM0 7h2v2H0zM14 7h2v2h-2z"/></svg></button>
  <button aria-label="椭圆弧"><svg viewBox="0 0 16 16"><path class="s" stroke-width="1.300" d="M5 12C-1 11-1 4 6 3.500c4-.5 7 1 8 3.500"/><path class="fb" d="M6 7h2v2H6zM14 7h2v2h-2zM6 12h2v2H6z"/></svg></button>
  <button aria-label="插入块"><svg viewBox="0 0 16 16"><path class="fb" d="M7 0h5v4h4v9H7z"/><path class="fw" d="M13 0l3 3h-3zM16 11v5h-5z"/><path fill="#6e747d" stroke="#d9d9d9" d="M1.500 6.500h8v6h-8zM0 13.500h3"/><circle cx="10" cy="12" r="3.500" fill="#8a8f98" fill-opacity=".7" stroke="#d9d9d9"/></svg></button>
  <button aria-label="创建块"><svg viewBox="0 0 16 16"><path fill="#6e747d" stroke="#d9d9d9" d="M1.500 5.500h8v7h-8zM0 13.500h3"/><circle cx="10.500" cy="12.500" r="3.200" fill="#6e747d" stroke="#d9d9d9"/><path class="fy" d="M12 0l1 2 2-1-1 2 2 1-2 1 1 2-2-1-1 2-1-2-2 1 1-2-2-1 2-1-1-2 2 1z"/></svg></button>
  <button aria-label="点"><svg viewBox="0 0 16 16"><path class="f" d="M7 2h2v2H7zM2 7h2v2H2zM12 7h2v2h-2zM7 12h2v2H7z"/></svg></button>
  <button aria-label="图案填充"><svg viewBox="0 0 16 16"><path class="s" d="M0 2.500h16M0 14.500h16M2.500 0v16M13.500 0v16"/><path class="sb" d="M4 7l3-3M4 10l6-6M4 13l8-8M7 13l5-5M10 13l2-2"/></svg></button>
  <button aria-label="渐变色"><svg viewBox="0 0 16 16"><path class="s" d="M0 2.500h16M0 14.500h16M2.500 0v16M13.500 0v16"/><path fill="url(#grad)" d="M4 4h8v9H4z"/></svg></button>
  <button aria-label="面域"><svg viewBox="0 0 16 16"><path class="f" d="M0 1h11l5 5v8H0z"/><circle class="fd" cx="7.500" cy="7.500" r="2.700"/></svg></button>
  <button aria-label="表格"><svg viewBox="0 0 16 16"><path class="s" d="M.5 1.500h15v13H.5zM0 5.500h16M0 8.500h16M0 11.500h16M5.500 5v9M10.500 5v9"/></svg></button>
  <button aria-label="多行文字"><svg viewBox="0 0 16 16"><text class="ta" x="8" y="14.500">A</text></svg></button>
  <button aria-label="添加选定对象"><svg viewBox="0 0 16 16"><circle cx="3.500" cy="3.500" r="3.500" fill="#5fd884"/><circle class="fb" cx="12.500" cy="12.500" r="3.500"/><path class="sw" d="M9 2.500h4.500V6M11 4.500l2.500 2 2-2"/></svg></button>
</div></aside>

<section class="canvas">
<svg class="drawing" viewBox="33 165 1638 1126" role="img" aria-label="结构图纸">
<g shape-rendering="crispEdges">
<g fill="none" stroke="#007c86"><path d="M178 628.500h7M178 633.500h7M327 628.500h6M327 633.500h6M476 628.500h6M476 633.500h6M624 628.500h7M624 633.500h7"/></g>
<path fill="#00969c" d="M627 602h2v253h-2zM923 602h2v233h-2z"/>
<g fill="#fff"><path d="M55 614h2v5h-2zM57 616h3v1h-3zM58 614h1v5h-1zM61 615h2v4h-2zM63 616h2v2h-2zM66 614h2v5h-2zM69 616h2v3h-2zM71 613h1v7h-1zM73 616h3v3h-3zM74 614h2v2h-2zM77 615h2v5h-2zM79 616h7v3h-7zM79 615h6v1h-6z"/><path d="M1382 617h17v2h-17zM1384 615h3v2h-3zM1388 614h3v4h-3zM1392 614h7v5h-7z"/></g>
<g class="frame"><path d="M36 628h141v79H36zM185 628h141v79H185zM334 628h141v79H334zM483 628h141v79H483zM632 628h141v79H632zM781 628h141v79H781zM930 628h141v79H930zM1079 628h141v79h-141zM1227 628h141v79h-141z"/></g>
<g class="inner"><path d="M40 630h135v76H40zM189 630h135v76H189zM338 630h135v76H338zM487 630h135v76H487zM934 630h135v76H934z"/><path d="M1377 628h91v64h-91zM1477 628h91v64h-91zM1576 628h91v64h-91z" stroke="#bbb"/></g>
<path fill="url(#pWht2)" d="M36 629h4v21h-4zM185 629h4v21h-4zM334 629h4v21h-4zM483 629h4v21h-4zM632 629h4v21h-4zM781 629h4v21h-4zM930 629h4v21h-4zM1079 629h4v21h-4zM1227 629h4v21h-4zM1377 629h3v17h-3zM1477 629h3v17h-3zM1576 629h3v17h-3z"/>

<g transform="translate(35 628)">
<path fill="url(#pRed)" d="M12 10h28v30H12zM43 10h88v48H43z"/>
<path fill="url(#pGrn)" d="M12 4h120v4H12zM42 61h90v4H42z"/>
<path fill="url(#pRow)" d="M12 8h119v4H12zM12 24h119v4H12zM12 40h119v4H12zM42 56h89v4H42z"/>
<path fill="url(#pGrnV)" d="M8 8h4v36H8zM132 8h4v53h-4z"/>
<path fill="url(#pWht2)" d="M41 12h4v8h-4zM41 30h4v8h-4zM41 46h4v8h-4zM127 12h4v8h-4zM127 30h4v8h-4zM127 46h4v8h-4z"/>
<path fill="#5cd" d="M21 13h6v2h-6zM21 31h4v6h-4zM46 20l10-5 1 1-10 6zM48 26l12 7-1 1-12-7zM95 12h8v1h-8zM95 35h9v1h-9zM85 17h10v1H85zM85 32h10v1H85zM98 52h8v1h-8zM46 52h10v1H46zM118 21h10v1h-10zM118 36h10v1h-10zM108 51h20v1h-20z"/>
<path fill="#0d0" d="M62 49h18v3H62zM86 15h2v4h-2zM86 31h2v4h-2zM86 48h2v4h-2z"/>
<path fill="#eee" d="M11 47h16v5H11zM9 49h20v1H9zM15 45h8v9h-8zM18 54h3v6h-3zM15 60h10v2H15z"/>
<path fill="url(#pMixG)" d="M30 47h7v7h-7z"/><path fill="#eee" d="M14 62h2v12h-2zM18 62h3v14h-3zM22 72h6v1h-6z"/><path fill="#2cc" d="M20 62h2v11h-2z"/>
</g>

<g transform="translate(184 628)">
<path fill="url(#pRed)" d="M12 12h118v30H12zM47 44h83v14H47z"/>
<path fill="url(#pGrn)" d="M12 4h120v4H12zM42 60h90v4H42z"/>
<path fill="url(#pRowY)" d="M12 8h119v4H12zM12 24h119v4H12zM12 40h119v4H12z"/>
<path fill="url(#pTee)" d="M42 56h89v8H42zM42 12h4v46h-4zM129 10h6v50h-6z"/>
<path fill="#dd0" d="M84 10h2v32h-2zM28 16h54v1H28zM28 33h54v1H28zM42 10h1v48h-1z"/>
<path fill="#996b00" d="M55 14h27v4H55zM55 31h27v3H55z"/>
<path fill="url(#pMixG)" d="M50 12h18v28H50z" opacity=".6"/>
<path fill="url(#pGrnV)" d="M8 8h4v36H8z"/>
<path fill="#0d0" d="M61 50h14v3H61z"/>
<path fill="url(#pMixR)" d="M6 48h12v8H6zM6 64h12v6H6zM28 63h10v7H28zM41 68h10v7H41zM75 67h12v8H75zM95 67h16v10H95zM128 65h9v7h-9z"/>
<path fill="url(#pMixC)" d="M18 48h18v8H18zM18 63h8v8h-8zM54 67h9v9h-9zM116 65h9v6h-9z"/>
<path fill="#e00" d="M8 50h8v4H8zM77 70h8v3h-8zM97 70h12v5H97z"/>
</g>

<g transform="translate(333 628)">
<path fill="url(#pRed)" d="M8 12h28v32H8zM43 12h84v48H43z"/>
<path fill="url(#pGrn)" d="M9 6h120v4H9zM39 62h90v4H39z"/>
<path fill="url(#pRowR)" d="M8 10h120v4H8zM8 26h28v3H8zM47 24h76v6H47zM8 43h120v4H8zM38 58h90v6H38zM38 10h5v50h-5zM124 10h5v50h-5z"/>
<path fill="url(#pGrnV)" d="M5 10h4v36H5zM129 10h4v50h-4z"/>
<path fill="#0f0" d="M65 69h9v3h-9z"/>
<path fill="url(#pTee)" d="M6 49h8v10H6zM17 49h8v8h-8zM28 49h8v9h-8zM7 65h9v8H7zM20 65h10v8H20z"/>
<path fill="#0e0" d="M6 74h24v3H6zM6 60h8v1H6zM18 60h6v1h-6zM26 60h8v1h-8z"/>
</g>

<g transform="translate(482 628)">
<path fill="url(#pRed)" d="M11 9h30v32H11z"/>
<path fill="url(#pWht)" d="M41 8h88v52H41z"/>
<path fill="url(#pWht2)" d="M41 8h6v52h-6zM69 8h6v52h-6zM100 8h5v52h-5zM124 8h5v52h-5zM41 42h88v8H41zM41 53h88v6H41z"/>
<path fill="#600" opacity=".5" d="M49 18h50v5H49zM49 28h50v3H49z"/>
<path fill="url(#pGrn)" d="M11 4h119v4H11zM41 60h88v4H41z"/>
<path fill="#fff" d="M11 25h30v1H11z"/><path fill="#f55" d="M11 41h30v1H11z"/>
<path fill="url(#pGrnV)" d="M8 8h4v34H8zM130 8h4v52h-4z"/>
<path fill="#0cc" d="M14 48h4v28h-4zM28 48h3v28h-3z"/><path fill="#0e0" d="M12 46h8v3h-8zM24 46h8v3h-8zM12 75h8v3h-8zM24 75h8v3h-8zM13 48h1v28h-1zM26 48h1v28h-1z"/><path fill="#d33" d="M27 60h3v8h-3z"/>
<path fill="url(#pMixC)" d="M57 68h14v9H57zM94 69h18v6H94z"/><path fill="url(#pMixG)" d="M39 69h15v8H39zM73 68h18v9H73z"/><path fill="#0e0" d="M33 71h24v1H33zM68 65h10v2H68zM44 78h5v1h-5zM88 78h5v1h-5z"/>
</g>

<g transform="translate(631 628)">
<path fill="url(#pRed)" d="M13 11h117v32H13zM42 43h88v18H42z"/>
<path fill="url(#pGrn)" d="M12 5h118v4H12zM12 63h118v4H12z"/>
<path fill="url(#pCynW)" d="M13 10h117v2H13zM13 25h117v3H13zM42 41h88v3H42zM42 60h88v1H42z"/>
<path fill="#0cc" d="M42 11h1v32h-1zM13 42h29v1H13z"/><path fill="#fff" d="M52 24h28v2H52zM52 40h28v1H52z"/><path fill="#f0f" d="M42 25h9v3h-9z"/><path fill="#cd0" d="M47 9h4v3h-4zM120 9h4v3h-4zM47 42h4v3h-4zM120 42h4v3h-4z"/>
<path fill="url(#pGrnV)" d="M8 10h4v52H8zM131 10h4v52h-4z"/><path fill="#0f0" d="M68 68h8v2h-8z"/>
</g>

<g transform="translate(780 628)">
<path fill="url(#pRed)" d="M14 9h118v32H14zM43 41h89v18H43z"/>
<path fill="url(#pGrn)" d="M13 3h119v4H13zM13 60h119v4H13z"/><path fill="#0b0" d="M13 7h119v1H13z"/>
<path fill="#0dd" d="M14 8h118v1H14zM14 25h118v1H14zM14 41h118v1H14zM43 58h89v2H43z"/>
<path fill="url(#pGrnV)" d="M9 8h4v52H9zM132 8h4v52h-4z"/><path fill="#0f0" d="M69 66h10v2H69z"/>
</g>

<g transform="translate(929 628)">
<path fill="url(#pPink)" d="M12 6h118v8H12zM12 24h118v8H12zM12 43h118v8H12zM12 61h90v9H12z"/>
<path fill="#a00" d="M12 4h1v4h-1zM16 4h1v4h-1zM21 4h1v4h-1zM26 4h1v4h-1zM31 4h1v4h-1zM36 4h1v4h-1zM12 22h1v4h-1zM21 22h1v4h-1zM31 22h1v4h-1zM12 41h1v4h-1zM21 41h1v4h-1zM31 41h1v4h-1z"/>
<path fill="#ddd" d="M8 14h128v1H8zM8 32h128v1H8zM8 51h128v1H8zM8 70h98v1H8z"/>
<path fill="url(#pGrn)" d="M12 16h118v3H12zM12 34h118v3H12zM12 52h118v4H12zM12 72h90v3H12z"/>
<path fill="#5dd" d="M14 8h4v7h-4zM37 8h4v6h-4zM70 6h5v8h-5zM99 6h4v8h-4zM124 6h4v8h-4zM70 24h4v7h-4zM99 24h4v7h-4zM124 24h4v7h-4zM37 45h4v6h-4zM70 43h4v7h-4zM99 43h4v7h-4zM124 43h4v7h-4zM14 62h4v8h-4zM41 62h4v8h-4zM70 62h4v8h-4zM96 62h4v8h-4z"/>
<path fill="#0e0" d="M130 5h3v12h-3zM130 23h3v12h-3zM130 42h3v12h-3zM101 60h3v13h-3zM66 20h10v2H66zM66 38h10v2H66zM66 57h10v2H66zM51 76h10v2H51z"/>
<path fill="url(#pWht2)" d="M108 74h33v5h-33z"/><path fill="#000" d="M129 75h6v2h-6z"/>
</g>

<g transform="translate(1078 628)">
<path fill="url(#pCyn)" d="M17 11h90v52H17z"/>
<path fill="url(#pGrn)" d="M18 6h88v4H18zM18 63h90v4H18z"/><path fill="url(#pGrnV)" d="M13 11h4v52h-4zM107 11h4v52h-4z"/>
<path fill="#900" d="M25 19h74v1H25zM25 53h74v1H25z"/><path fill="#a80" d="M25 35h74v2H25zM25 52h74v1H25z"/><path fill="#111" d="M28 20h68v1H28zM28 37h68v1H28z"/>
<path fill="#0c0" d="M24 11h1v52h-1zM35 11h1v52h-1zM97 11h1v52h-1z"/>
<path fill="#0f0" d="M59 71h10v3H59z"/>
<g fill="#4dd"><path d="M115 16h2v4h-2zM122 16h2v4h-2zM117 20h5v2h-5zM127 16h2v4h-2zM134 16h2v4h-2zM129 20h5v2h-5zM124 27h2v3h-2zM131 27h2v3h-2zM126 30h5v2h-5z"/></g><path fill="#0e0" d="M118 21h3v1h-3zM130 21h3v1h-3z"/>
</g>

<g transform="translate(1226 628)">
<path fill="url(#pCyn)" d="M16 5h48v9H16zM80 5h50v9H80z"/><path fill="url(#pPink)" d="M86 9h22v6H86z"/>
<path fill="url(#pTee)" d="M9 4h5v10H9zM65 5h5v10h-5zM76 6h5v8h-5zM130 4h6v11h-6z"/>
<path fill="url(#pGrn)" d="M14 15h52v3H14zM78 15h52v3H78z"/><path fill="#000" d="M22 8h5v5h-5zM119 10h4v3h-4z"/>
<path fill="#0ee" d="M68 17l8 2v3H68zM76 22h7v1h-7z"/><path fill="#0e0" d="M38 18h8v1h-8zM100 18h8v1h-8z"/>
<path fill="url(#pCynX)" d="M17 25h88v10H17zM17 44h88v9H17z"/><path fill="#0cd" d="M17 61h88v3H17z"/>
<path fill="#caa" d="M13 34h95v1H13zM13 52h95v1H13zM13 71h100v1H13z"/>
<path fill="#944" d="M18 64h1v7h-1zM23 64h1v7h-1zM28 64h1v7h-1zM33 64h1v7h-1zM38 64h1v7h-1zM43 64h1v7h-1zM48 64h1v7h-1zM53 64h1v7h-1zM58 64h1v7h-1zM63 64h1v7h-1zM68 64h1v7h-1zM73 64h1v7h-1zM78 64h1v7h-1zM83 64h1v7h-1zM88 64h1v7h-1zM93 64h1v7h-1zM98 64h1v7h-1zM103 64h1v7h-1z"/>
<path fill="#eee" d="M17 23h7v2h-7zM28 23h6v1h-6zM17 43h7v1h-7zM28 43h6v1h-6zM18 60h6v1h-6zM28 60h6v1h-6z"/>
<path fill="url(#pGrn)" d="M17 36h88v4H17zM17 54h88v3H17zM17 72h88v3H17z"/><path fill="#0e0" d="M106 25h3v10h-3zM106 44h3v9h-3zM107 62h2v12h-2zM58 41h8v2h-8zM58 58h8v2h-8zM58 76h8v2h-8z"/>
</g>

<g transform="translate(1376 628)">
<path fill="url(#pTee)" d="M7 8h81v8H7zM7 23h80v5H7z"/><path fill="url(#pMixW)" d="M8 8h5v6H8zM31 8h6v6h-6zM61 8h5v6h-5zM80 8h6v6h-6z"/><path fill="#0ee" d="M7 20h80v4H7z"/><path fill="#fff" d="M4 19h8v2H4zM40 28h12v1H40z"/>
<path fill="#e00" d="M18 31h1v8h-1zM33 31h1v14h-1zM49 31h1v8h-1z"/><path fill="url(#pMixW)" d="M14 34h40v4H14zM10 39h14v9H10zM42 39h14v9H42z"/><path fill="url(#pMixG)" d="M12 35h12v8H12zM44 35h12v8H44z"/><path fill="none" stroke="#0cc" d="M5 48l55 1M5 51h55M12 46l21-9 21 9M20 48l13-9 13 9M5 45v7M60 45v7"/><path fill="#0e0" d="M17 53h34v3H17zM30 56h6v4h-6z"/><path fill="#000" d="M18 54h32v1H18z"/>
<path fill="url(#pMixW)" d="M69 30h11v12H69z"/><path fill="#22d" d="M72 34h5v4h-5z"/><path fill="url(#pMixC)" d="M63 45h6v9h-6zM71 43h16v10H71z"/><path fill="#0cc" d="M64 52h22v1H64z"/>
</g>

<g transform="translate(1476 628)">
<path fill="#0e0" d="M8 13h22v4H8z"/><path fill="url(#pMixG)" d="M7 12h22v7H7zM31 13h6v5h-6zM72 28h11v12H72zM18 45h12v10H18z"/><path fill="url(#pMixW)" d="M41 10h10v11H41zM56 13h10v4H56zM46 47h12v5H46z"/>
<path fill="url(#pMixC)" d="M70 10h13v11H70zM7 28h13v11H7zM24 28h13v11H24zM40 28h13v11H40zM56 28h12v11H56z"/><path fill="none" stroke="#0c4" d="M9 30h9v7H9zM26 30h9v7h-9zM43 30h8v7h-8zM72 12h9v7h-9z"/><path fill="#d9a" d="M45 46h12v2H45zM49 48h5v3h-5z"/><path fill="#0cd" d="M49 54h5v2h-5zM19 53h10v1H19z"/>
</g>

<g transform="translate(1576 628)">
<path fill="url(#pMixG)" d="M6 6h28v7H6zM36 6h18v6H36zM58 6h13v6H58zM75 7h13v8H75zM10 25h32v5H10zM48 24h13v8H48zM64 25h6v7h-6zM73 25h11v7H73zM7 49h11v9H7zM25 48h11v8H25z"/>
<path fill="url(#pMixW)" d="M8 34h11v8H8zM23 34h12v8H23zM76 8h8v5h-8z"/><path fill="#b5f" d="M6 17h6v2H6zM22 17h6v2h-6zM41 16h5v2h-5zM61 16h5v2h-5zM80 17h6v2h-6zM75 41h10v1H75z"/><path fill="#0cd" d="M7 16h4v1H7zM41 14h5v2h-5zM62 14h4v2h-4zM10 42h6v2h-6zM27 42h8v1h-8zM10 57h6v1h-6zM28 57h8v2h-8zM16 30h4v2h-4zM32 30h5v2h-5zM51 33h6v2h-6zM76 33h6v2h-6z"/>
<path fill="none" stroke="#0ad" stroke-width="2" d="M55 40h-8v14h8M67 40h-7v14h8M70 44h9v6h-8"/><path fill="#0e0" d="M48 44h2v7h-2zM61 44h2v7h-2z"/><path fill="#ee0" d="M10 50h4v2h-4zM76 27h4v2h-4z"/>
</g>
<path fill="#e8e8e8" d="M1610 165h1v1077h-1zM1610 1254h1v37h-1zM33 1247h1571v1H33zM1617 1247h54v1h-54z"/>
<path fill="none" stroke="#e8e8e8" d="M1604.500 1241.500h12v12h-12zM55.500 1259.500h9v9h-9zM59.500 1214v50M59 1264.500h51"/>
</g>
<g class="ucs"><text x="67" y="1210">Y</text><text x="120" y="1263">X</text></g>
</svg>

<div class="cube">
<svg viewBox="0 0 136 136" aria-label="ViewCube">
<circle cx="68" cy="68" r="53.500" fill="none" stroke="#fff" stroke-opacity=".17" stroke-width="13"/>
<rect x="42.500" y="42.500" width="51" height="51" fill="#a3a3a3" stroke="#7b7b7b"/><path fill="#96989f" d="M52 52h32v32H52z"/>
<text class="top" x="68" y="79">上</text><text x="68" y="20">北</text><text x="68" y="133">南</text><text x="12" y="76">西</text><text x="124" y="76">东</text>
</svg>
<button class="wcs">WCS <svg viewBox="0 0 9 6"><path fill="none" stroke="#b9b9c4" d="M1 .5h7L4.500 5z"/></svg></button>
</div>

<div class="cmd">
  <p class="old">命令: '_.zoom</p>
  <p class="mid">指定窗口的角点，输入比例因子 (nX 或 nXP)，或者</p>
  <p class="cur">[全部(A)/中心(C)/动态(D)/范围(E)/上一个(P)/比例<br>(S)/窗口(W)/对象(O)] &lt;实时&gt;: _e</p>
  <div class="line">
    <i class="grip"></i>
    <button aria-label="关闭"><svg viewBox="0 0 10 10"><path d="M1 1l8 8M9 1L1 9" fill="none" stroke="#b0b0b0" stroke-width="1.600"/></svg></button>
    <button class="wrench" aria-label="自定义"><svg viewBox="0 0 16 16"><path fill="none" stroke="#b0b0b0" stroke-width="2.500" d="M1 15l8-8"/><path fill="#b0b0b0" d="M8 5l3-5 1 0v4h3l1-1-1 4-4 2-3-1z"/></svg></button>
    <div class="field">
      <button aria-label="最近使用的命令"><svg class="pr" viewBox="0 0 16 13"><path fill="none" stroke="#333" d="M.5.5h15v12H.5zM2 5l3 2-3 2M6 9.500h4"/><path fill="#333" d="M0 0h16v3H0z"/></svg><svg class="tri" viewBox="0 0 8 8"><path fill="#333" d="M0 2h8L4 6z"/></svg></button>
      <input type="text" aria-label="命令" placeholder="键入命令">
      <button aria-label="历史记录"><svg class="tri" viewBox="0 0 8 8"><path fill="#333" d="M0 6h8L4 2z"/></svg></button>
    </div>
  </div>
</div>
</section>

<aside class="side right"><div class="vbar"><i class="vgrip"></i>
  <button aria-label="删除"><svg viewBox="0 0 16 16"><path class="fy" d="M6 9l8-9h2v4l-7 8z"/><path class="fw" d="M5 10l1-2 4 4-2 1z"/><circle class="fr" cx="5" cy="12" r="2.500"/><path class="s" d="M0 15.500h3"/><path class="sb" d="M8 15.500h8"/></svg></button>
  <button aria-label="复制"><svg viewBox="0 0 16 16"><circle class="s" cx="3.500" cy="3.500" r="3"/><path class="sw" d="M8 1.500h5.500V5M11.500 3.500l2 2 2-2"/><circle class="sb" cx="7.500" cy="12.500" r="3"/><circle class="sb" cx="12.500" cy="12.500" r="3"/></svg></button>
  <button aria-label="镜像"><svg viewBox="0 0 16 16"><path class="s" d="M6.500 2v12.500h-6z"/><path class="sb" d="M9.500 2v12.500h6z"/></svg></button>
  <button aria-label="偏移"><svg viewBox="0 0 16 16"><path class="sb" d="M16 2.500H7C-1 3-1 13 7 13.500h9"/><path class="s" d="M16 5.500H8c-4 0-4 5 0 5h8"/></svg></button>
  <button aria-label="阵列"><svg viewBox="0 0 16 16"><path class="s" d="M1.500 1.500h5v5h-5z"/><path class="sb" d="M9.500 1.500h5v5h-5zM1.500 9.500h5v5h-5zM9.500 9.500h5v5h-5z"/><path class="fw" d="M16 11v5h-5z"/></svg></button>
  <button aria-label="移动"><svg viewBox="0 0 16 16"><path class="sw" stroke-width="1.500" d="M8 2v12M2 8h12"/><path class="fw" d="M8 0l3 4H5zM8 16l3-4H5zM0 8l4-3v6zM16 8l-4-3v6z"/></svg></button>
  <button aria-label="旋转"><svg viewBox="0 0 16 16"><path class="s" stroke-width="1.500" d="M10 3C5 1 1 5 1 9c0 8 14 8 14-1"/><path class="fw" d="M8 0l5 3-5 3z"/></svg></button>
  <button aria-label="缩放"><svg viewBox="0 0 16 16"><path class="s" d="M.5 7.500h8v8h-8z"/><path class="sb" d="M.5 5V.5h15v15H11"/></svg></button>
  <button aria-label="拉伸"><svg viewBox="0 0 16 16"><path class="s" d="M6.500 8V.5h-6v15h6V13"/><path class="sb" d="M9 .5h3l3.500 15H9" stroke-dasharray="4 2"/><path class="sw" d="M4 11.500h6M8 9l2.500 2.500L8 14"/></svg></button>
  <button aria-label="修剪"><svg viewBox="0 0 16 16"><path class="sb" stroke-dasharray="3 1" d="M0 1.500h8"/><path class="s" d="M12 1.500h4"/><path class="sw" stroke-width="2" d="M10 0L9 12M5 4l6 8"/><circle class="sw" cx="9" cy="13.500" r="1.800"/><circle class="sw" cx="13" cy="11.500" r="1.800"/></svg></button>
  <button aria-label="延伸"><svg viewBox="0 0 16 16"><path class="s" d="M0 10.500h4M14.500 2v12"/><path class="sb" stroke-dasharray="3 1" d="M5 10.500h9"/><path class="sw" d="M4 6.500h6"/><path class="fw" d="M9 4l4 2.500L9 9z"/></svg></button>
  <button aria-label="打断于点"><svg viewBox="0 0 16 16"><path class="s" d="M9 3.500H.5v11h15v-11H13"/><path class="sb" d="M11.500 1v5"/></svg></button>
  <button aria-label="打断"><svg viewBox="0 0 16 16"><path class="s" d="M4 3.500H.5v11h15v-11H12"/><path class="sb" d="M5.500 1v5M10.500 1v5"/></svg></button>
  <button aria-label="合并"><svg viewBox="0 0 16 16"><path class="s" d="M0 8.500h16"/><path class="fb" d="M8 8.500L4 6v5zM8 8.500L12 6v5z"/></svg></button>
  <button aria-label="倒角"><svg viewBox="0 0 16 16"><path class="s" d="M10 1.500h6M.5 11v5"/><path class="sb" d="M1 10l8-8"/></svg></button>
  <button aria-label="圆角"><svg viewBox="0 0 16 16"><path class="s" d="M10 1.500h6M.5 11v5"/><path class="sb" d="M.5 10c0-5 4-8.500 8.500-8.500"/></svg></button>
  <button aria-label="光顺曲线"><svg viewBox="0 0 16 16"><path class="s" d="M.5 16c0-4 1-6 2-8M13 9c2-3 2.500-5 2.500-9"/><path class="sb" d="M3 7c4-4 5 7 9 4"/></svg></button>
  <button aria-label="分解"><svg viewBox="0 0 16 16"><path class="s" stroke-width="1.500" d="M2.500 6.500h8v8h-8z"/><path class="sb" d="M.5 5v10M3 4l3-3.500h8L11 4zM12.500 6l3-3.500v9l-3 3z"/></svg></button>
</div></aside>
</main>

<nav class="tabs layouts">
  <button class="burger" aria-label="布局列表"><svg><use href="#burger"/></svg></button>
  <div class="tab on"><button>模型</button></div>
  <button class="next">布局1</button>
  <svg class="slash"><use href="#slash"/></svg>
  <button class="add" aria-label="新建布局"><svg><use href="#plus"/></svg></button>
  <svg class="slash"><use href="#slash"/></svg>
</nav>

<footer class="status">
  <div class="p fill"></div>
  <button class="p coords">2224339, -2402977, 0</button>
  <button class="p model">模型</button>
  <div class="p"><button aria-label="栅格"><svg viewBox="0 0 16 16"><path class="s" d="M4.500 0v16M8.500 0v16M12.500 0v16M0 4.500h16M0 8.500h16M0 12.500h16"/></svg></button><button aria-label="捕捉"><svg viewBox="0 0 16 16"><path class="f" d="M2 2h2v2H2zM7 2h2v2H7zM12 2h2v2h-2zM2 7h2v2H2zM7 7h2v2H7zM12 7h2v2h-2zM2 12h2v2H2zM7 12h2v2H7zM12 12h2v2h-2z"/></svg></button><button class="dd" aria-label="捕捉设置"><svg><use href="#caret"/></svg></button></div>
  <div class="p t"><button aria-label="推断约束"><svg viewBox="0 0 16 16"><path class="s" d="M7.500 11V.5h7v5h-7"/><path class="f" d="M7 5h4v4H7zM0 10h8v6H0z"/></svg></button></div>
  <div class="p t"><button class="act" aria-label="动态输入"><svg viewBox="0 0 16 16"><path class="sw" d="M0 4.500h7M3.500 1v7"/><path class="fw" d="M5 9h11v5H5z"/><path fill="#5f8dc0" d="M7 10h1v3H7z"/></svg></button></div>
  <div class="p t"><button aria-label="正交"><svg viewBox="0 0 16 16"><path class="s" d="M.5 0v15.500H16M1 9.500h5.500V15"/></svg></button><button aria-label="极轴"><svg viewBox="0 0 16 16"><circle class="s" cx="6.500" cy="9" r="6" stroke-width="1.300"/><path class="s" d="M6.500 9L14 1M6.500 9H16" stroke-width="1.300"/></svg></button><button class="dd" aria-label="极轴设置"><svg><use href="#caret"/></svg></button><button aria-label="等轴测"><svg viewBox="0 0 16 16"><path stroke="#5fd884" stroke-width="1.300" d="M8 0v16"/><path stroke="#e86c6c" stroke-width="1.300" d="M1 2l13 12"/><path class="fw" d="M7 7h2v2H7z"/></svg></button><button class="dd" aria-label="等轴测设置"><svg><use href="#caret"/></svg></button></div>
  <div class="p z"><button aria-label="对象捕捉追踪"><svg viewBox="0 0 16 16"><path class="s" stroke-width="1.300" d="M14 3L3 13.500h13"/><path class="f" d="M5 8l5 1-4 4z"/></svg></button></div>
  <div class="p t"><button class="act" aria-label="对象捕捉"><svg viewBox="0 0 16 16"><path class="sw" d="M.5.5h4v4h-4zM6 2.500h9.500v13H2.500V6"/></svg></button><button class="dd" aria-label="捕捉选项"><svg><use href="#caret"/></svg></button></div>
  <div class="p t"><button aria-label="线宽"><svg viewBox="0 0 16 16"><path class="f" d="M0 1h16v1H0zM0 5h9v2H0zM10 5h6v2h-6zM0 9h9v2H0zM0 13h9v3H0zM10 10h6v1h-6z"/></svg></button></div>
  <div class="p t"><button class="act" aria-label="透明度"><svg viewBox="0 0 16 16"><path class="sw" d="M.5.5h15v15H.5z"/><path class="fw" d="M2 2h3v3H2zM8 2h3v3H8zM5 5h3v3H5zM11 5h3v3h-3zM2 8h3v3H2zM8 8h3v3H8zM5 11h3v3H5zM11 11h3v3h-3z"/></svg></button></div>
  <div class="p t"><button aria-label="选择循环"><svg viewBox="0 0 16 16"><path class="s" d="M0 2.500h5M2.500 0v5M4.500 12V4.500H12"/><path fill="#86e0a4" stroke="#d9d9d9" d="M6.500 6.500h9v9h-9z"/></svg></button></div>
  <div class="p"><button aria-label="三维对象捕捉"><svg viewBox="0 0 16 16"><path class="s" d="M3.500 9V4.500l4-4h8v7l-4 4H7M3.500 4.500h8v7M11.500 4.500l4-4"/><path fill="none" stroke="#ff9a5c" stroke-width="1.500" d="M1 11h4v4H1z"/></svg></button><button class="dd" aria-label="三维捕捉设置"><svg><use href="#caret"/></svg></button></div>
  <div class="p"><button class="act" aria-label="动态 UCS"><svg viewBox="0 0 16 16"><path class="sw" stroke-width="1.500" d="M3 2v11h11"/><path class="fw" d="M3 0l3 4H0zM16 13l-4-3v6zM10 2L6 7h3l-1 4 5-5h-3l1-4z"/></svg></button><button aria-label="选择过滤"><svg viewBox="0 0 16 16"><path class="s" d="M2.500 4.500h8v9h-8zM3 4l4-3.500h8v8l-4 4" stroke-dasharray="3 1"/><path class="fb" d="M0 3h3v3H0zM10 3h3v3h-3zM0 13h3v3H0zM10 13h3v3h-3z"/></svg></button><button class="dd" aria-label="过滤设置"><svg><use href="#caret"/></svg></button><button class="act" aria-label="小控件"><svg viewBox="0 0 16 16"><path class="sw" d="M8 1l6 3.500v8L8 15.500 2 12.500v-8zM8 2v7M8 9l-6 4M8 9l6 4"/><path class="fw" d="M6 0h4v3H6zM0 11h4v4H0zM12 11h4v4h-4zM6.500 7h3v3h-3z"/></svg></button><button class="dd" aria-label="小控件设置"><svg><use href="#caret"/></svg></button></div>
  <div class="p"><button class="act" aria-label="注释可见性"><svg viewBox="0 0 16 16"><path class="fw" d="M6 0l2 5v4l5 6H9l-3-3-3 3H0l5-7V5z"/><circle class="sw" cx="13" cy="3.500" r="2.500"/></svg></button><button aria-label="自动缩放"><svg viewBox="0 0 16 16"><path class="f" d="M6 0l2 5v4l5 7H9l-3-3-3 3H0l4-8V5zM13 0l-3 4h2l-1 4 4-4h-2l1-4z"/></svg></button><button aria-label="注释"><svg viewBox="0 0 16 16"><path class="f" d="M8 0l2 5v4l4 7h-4l-2-4-2 4H2l4-7V5z"/></svg></button><button class="scale">1:1 / 100%</button><button class="dd" aria-label="注释比例"><svg><use href="#caret"/></svg></button></div>
  <div class="p t"><button aria-label="切换工作空间"><svg viewBox="0 0 16 16"><circle class="s" cx="8" cy="8" r="4.200" stroke-width="3"/><path class="s" stroke-width="3" d="M8 0v3M8 13v3M0 8h3M13 8h3M2.300 2.300l2 2M11.700 11.700l2 2M13.700 2.300l-2 2M4.300 11.700l-2 2"/></svg></button><button class="dd" aria-label="工作空间"><svg><use href="#caret"/></svg></button></div>
  <div class="p"><button aria-label="注释监视器"><svg viewBox="0 0 16 16"><path class="f" d="M7 0h2v7h7v2H9v7H7V9H0V7h7z"/></svg></button></div>
  <div class="p t"><button aria-label="单位"><svg viewBox="0 0 16 16"><path class="f" d="M4 0h8v2H9v1h3v1H8v2h4v1H9v2h3v1H8v2h4v1H9v1h3v2H4z"/></svg></button><button class="units">小数</button><button class="dd" aria-label="单位设置"><svg><use href="#caret"/></svg></button></div>
  <div class="p"><button aria-label="快捷特性"><svg viewBox="0 0 16 16"><path class="s" d="M2.500.5h11v15h-11zM3 2.500h10"/><path class="f" d="M4 5h2v2H4zM7 5h5v1H7zM4 9h2v1H4zM7 9h5v1H7zM4 12h2v2H4zM7 12h5v1H7z"/></svg></button></div>
  <div class="p t"><button aria-label="锁定界面"><svg viewBox="0 0 16 16"><path class="s" d="M6 13.500H.5V.5h14V6M1 2.500h14"/><path class="f" d="M8 10h6v6H8z"/><path class="s" stroke-width="1.500" d="M12 10V8c0-2 3-2 3 0v2"/></svg></button><button class="dd" aria-label="锁定设置"><svg><use href="#caret"/></svg></button></div>
  <div class="p"><button aria-label="隔离对象"><svg viewBox="0 0 16 16"><path class="s" d="M.5.5h6v6h-6zM3 15.500l3.500-6 3.500 6z"/><circle class="s" cx="12.500" cy="7" r="3"/></svg></button></div>
  <div class="p"><button class="act" aria-label="图形性能"><svg viewBox="0 0 16 16"><circle cx="8" cy="8" r="7.500" fill="#8fb3dd" stroke="#fff"/><path class="sw" stroke-width="1.500" d="M7 10l5-5"/></svg></button></div>
  <div class="p cloud"><button aria-label="参照状态"><svg viewBox="0 0 16 16"><path fill="#2f7fd6" d="M0 0h10l3 4v6H0z"/><path class="sw" d="M5.500 0v9M1 5.500h11"/><path fill="#ffc02e" d="M0 10h7v6H2c-2 0-2-2-2-2z"/><path class="sg" stroke-width="2" d="M8 12l3 3 5-5"/></svg></button></div>
  <div class="p t"><button aria-label="全屏"><svg viewBox="0 0 16 16"><path class="s" d="M.5 2.500h15v12H.5zM3 12l3-3M10 8l3-3"/><path class="f" d="M2 13V9l4 4zM14 4v4l-4-4z"/></svg></button></div>
  <div class="p"><button aria-label="自定义"><svg viewBox="0 0 16 16"><path class="f" d="M0 1h16v2H0zM0 7h16v2H0zM0 13h16v2H0z"/></svg></button></div>
</footer>
</div>
</body>
</html>
```
FILE: styles.css
```css
* { box-sizing: border-box; margin: 0; padding: 0; }

:root {
  --dark: #222933;
  --panel: #3b4453;
  --light: #d9d9d9;
  --blue: #7cc4ff;
  --active: #5f8dc0;
}

body {
  background: linear-gradient(#dfe6ea 50%, #6f6650 50%);
  font: 12px/16px "Noto Sans", "Noto Sans CJK SC", sans-serif;
  color: #f2f2f2;
}

button, input, select { font: inherit; color: inherit; background: none; border: 0; outline: 0; }
button { display: flex; align-items: center; justify-content: center; flex: none; white-space: nowrap; }
svg { display: block; flex: none; width: 16px; height: 16px; overflow: visible; }
.defs { position: absolute; width: 0; height: 0; }

/* icon paints */
.f { fill: var(--light); }
.fw { fill: #fff; }
.fb { fill: var(--blue); }
.fy { fill: #ffd271; }
.fr { fill: #ff5c5c; }
.fd { fill: var(--panel); }
.s, .sb, .sw, .sg, .sr { fill: none; }
.s { stroke: var(--light); }
.sb { stroke: #6fbfff; }
.sw { stroke: #fff; }
.sg { stroke: #5fd884; }
.sr { stroke: #ff5c5c; }
.q { font-size: 12px; font-weight: 700; fill: var(--panel); text-anchor: middle; }
.dwf { font-size: 6px; font-weight: 700; fill: #fff; text-anchor: middle; }
.ta { font-size: 18px; font-weight: 500; fill: var(--light); text-anchor: middle; }

.window {
  min-height: 100vh;
  display: flex;
  flex-direction: column;
  background: var(--dark);
  border: 1px solid #0696d7;
  border-radius: 8px;
  overflow: hidden;
}

.dd { width: 12px; }
.dd svg { width: 6px; height: 6px; }
.dim { opacity: .4; }

/* title bar */
.title { display: flex; align-items: center; height: 30px; padding-left: 14px; }
.title h1 { flex: 1; font-size: 12px; font-weight: 400; text-align: center; white-space: nowrap; }
.app {
  width: 24px; height: 22px;
  background: linear-gradient(90deg, #ef6080 0 4px, #e51050 4px 22px, #8c0a30 22px);
  border-bottom: 3px solid #8c0a30;
  border-radius: 2px;
  font-size: 15px; font-weight: 700; color: #fff;
}
.quick, .info, .winbtns { display: flex; align-items: center; height: 100%; }
.quick { padding-left: 6px; }
.quick button, .info button { width: 24px; height: 24px; }
.quick .dd, .info .dd { width: 12px; }
.quick .cust { width: 16px; }
.quick .cust svg { width: 8px; height: 8px; }
.quick .share { width: auto; padding-left: 4px; gap: 5px; color: #8fcbff; }
.info input {
  width: 178px; height: 20px; margin: 0 1px 0 2px; padding: 0 3px;
  background: #464f61; color: #fff; font-style: italic;
}
.info input::placeholder { color: #a9afba; opacity: 1; }
.info .login { width: 106px; padding-left: 4px; gap: 4px; justify-content: flex-start; }
.info .cart { margin-left: 4px; }
.info .bar { width: 1px; height: 18px; margin: 0 5px 0 4px; background: #4b5566; }
.winbtns { padding-left: 61px; }
.winbtns button { width: 46px; height: 30px; }
.winbtns svg, .mdi svg { width: 11px; height: 11px; }

/* menu bar */
.menu {
  display: flex; align-items: center; height: 22px; padding: 2px 4px 0 5px;
  border-bottom: 1px solid var(--panel); color: #b2b5ba;
}
.menu button { padding: 0 13px 0 12px; }
.mdi { display: flex; margin-left: auto; }
.menu .mdi button { width: 32px; padding: 0; }

/* document and layout tabs */
.tabs { display: flex; align-items: center; height: 24px; padding-left: 19px; }
.files { margin-top: 2px; }
.burger svg { height: 13px; }
.slash { width: 7px; }
.slash.first { margin-left: 11px; }
.start { padding: 0 8px; }
.tab {
  display: flex; align-items: center; height: 24px; background: var(--panel);
  padding: 0 12px 0 16px; gap: 7px; font-weight: 700;
  clip-path: polygon(9px 0, 100% 0, calc(100% - 9px) 100%, 0 100%);
}
.tab .x svg { width: 9px; height: 9px; }
.tabs .next { padding: 0 10px 0 7px; }
.tabs .next.long { padding-right: 20px; }
.add { margin: 0 10px; }
.add svg { width: 14px; height: 14px; }
.layouts .tab { margin-left: 9px; padding: 0 17px; }
.layouts .add { margin-left: 9px; }

/* toolbars */
.bars { margin: 0 3px; padding: 4px 0 4px 1px; background: var(--panel); display: flex; flex-direction: column; gap: 3px; }
.row { display: flex; gap: 1px; }
.bar-box { display: flex; align-items: center; height: 24px; border: 1px solid var(--dark); border-radius: 1px; }
.bar-box > button { width: 23px; height: 22px; padding: 0 4px 0 3px; }
.bar-box > .dd { width: 13px; padding: 0; }
.bar-box .dd svg { width: 8px; height: 8px; }
.grip {
  width: 7px; height: 16px; flex: none;
  background: repeating-linear-gradient(var(--panel) 0 1px, transparent 1px 2px), linear-gradient(90deg, transparent 1px, #aab0ba 1px 2px, transparent 2px 3px, #aab0ba 3px 4px, transparent 4px);
}
.sep { width: 6px; height: 20px; flex: none; border-left: 2px solid transparent; background: linear-gradient(90deg, var(--dark) 0 1px, #7f8794 1px 2px, transparent 2px) no-repeat; }
.combo {
  display: flex; align-items: center; height: 22px; padding: 0 3px;
  background: #fff; border: 1px solid #c9c9c9; color: #222;
}
.combo select { flex: 1; min-width: 0; padding-left: 3px; appearance: none; opacity: 1; }
.combo .chev { width: 10px; height: 10px; color: #555; }
.layer { width: 300px; padding: 0 2px 0 3px; }
.layer svg { margin-right: 1px; }
.layer .gapl { margin: 0 3px 0 4px; }
.layer .sw-c { margin: 0 1px 0 2px; }
.layer .chev { margin: 0; }
.sw-c { width: 14px; height: 14px; background: #0ff; border: 1px solid #333; flex: none; }
.ln { height: 1px; background: #000; margin: 0 2px 0 1px; flex: none; }
.l60 { width: 60px; }
.l35 { width: 35px; }
.c150 { width: 150px; }
.c160 { width: 160px; }
.c125 { width: 125px; }
.c120 { width: 120px; }
.c119 { width: 119px; }
.c120 select { padding-left: 15px; }
.off { color: #777; background: #f9f9f9; }
.off select { padding-left: 6px; }
.off .chev { color: #bbb; }

/* work area */
.work { flex: 1; margin: 0 3px; padding-bottom: 4px; background: var(--panel); display: grid; grid-template-columns: 29px 1fr 32px; }
.vbar { width: 24px; margin-left: 1px; border: 1px solid var(--dark); display: flex; flex-direction: column; }
.right .vbar { width: 25px; margin-left: 4px; }
.vbar button { height: 22px; padding-left: 2px; justify-content: flex-start; }
.right .vbar button { padding-left: 3px; }
.vgrip {
  height: 8px; width: 14px; margin-left: 2px;
  background: linear-gradient(90deg, var(--panel) 50%, transparent 50%) 0 0 / 2px 8px, linear-gradient(transparent 2px, #aab0ba 2px 3px, transparent 3px 4px, #aab0ba 4px 5px, transparent 5px);
}
.canvas { position: relative; background: #000; overflow: hidden; min-height: 700px; }
.drawing { position: absolute; inset: 0; width: 100%; height: 100%; }
.frame { fill: none; stroke: #a6a600; stroke-width: 2; }
.inner { fill: none; stroke: #a8a8a8; stroke-width: 2; }
.ucs { font: 300 19px "Open Sans", sans-serif; fill: #eee; text-anchor: middle; }

.cube { position: absolute; top: 14px; right: 15px; width: 136px; display: flex; flex-direction: column; align-items: center; }
.cube > svg { width: 136px; height: 136px; font: 500 19px "Noto Sans CJK SC", sans-serif; fill: #9c9c9c; text-anchor: middle; }
.cube .top { font: 32px "Noto Sans CJK SC", sans-serif; fill: #4a4a4c; }
.wcs { width: 48px; height: 18px; margin-top: 19px; gap: 6px; background: #74747f; border: 1px solid #8c8c96; border-radius: 3px; color: #26262b; font: 11px/14px "Liberation Sans", sans-serif; }
.wcs svg { width: 9px; height: 6px; }

/* command line */
.cmd { position: absolute; left: 50%; bottom: 0; width: 395px; margin-left: -198px; display: flex; flex-direction: column; align-items: flex-start; }
.cmd p {
  margin: 0 0 5px 64px; padding: 0 2px; border-radius: 2px; background: #555; color: #e6e6e6;
  font: 12px/15px "DejaVu Sans Mono", "Noto Sans CJK SC", monospace; white-space: nowrap;
}
.cmd .old { background: #484848; color: #b4b4b4; }
.cmd .mid { min-width: 308px; }
.cmd .cur { min-width: 320px; margin-bottom: 2px; background: linear-gradient(#555, #6a6a6a); color: #f4f4f4; }
.line { display: flex; align-items: center; width: 100%; height: 27px; background: var(--dark); border: 1px solid #191e26; }
.line .grip { width: 8px; margin-left: 1px; background: repeating-linear-gradient(var(--dark) 0 1px, transparent 1px 2px), linear-gradient(90deg, transparent 2px, #aab0ba 2px 3px, transparent 3px 4px, #aab0ba 4px 5px, transparent 5px 6px, #aab0ba 6px 7px, transparent 7px); }
.line > button { width: 24px; }
.line > button svg { width: 10px; height: 10px; }
.line > .wrench svg { width: 16px; height: 16px; }
.field { flex: 1; min-width: 0; height: 25px; display: flex; align-items: center; background: #b1b1b1; border-radius: 2px; padding: 0 4px; }
.field button { gap: 3px; }
.field .pr { height: 13px; }
.field .tri { width: 7px; height: 7px; }
.field input { flex: 1; min-width: 0; padding-left: 8px; font-style: italic; font-size: 13px; color: #222; }
.field input::placeholder { color: #555; opacity: 1; }

/* status bar */
.status { display: flex; margin: 6px 6px 5px 5px; gap: 3px; }
.p { display: flex; align-items: center; justify-content: center; height: 24px; background: var(--panel); flex: none; }
.p.fill { flex: 1; }
.p.t { margin-right: -2px; }
.p.z { margin-right: -3px; }
.p.coords { width: 150px; padding-right: 5px; justify-content: flex-end; }
.p.model { width: 30px; }
.p > button { width: 24px; height: 24px; }
.p > .dd { width: 16px; }
.p .dd svg { width: 8px; height: 8px; }
.p > .act { background: var(--active); border: 1px solid var(--panel); }
.p > .scale { width: 58px; padding-left: 4px; justify-content: flex-start; font-size: 11px; }
.p > .units { width: 57px; padding-left: 6px; justify-content: flex-start; }
.p.cloud { width: 30px; }
```
